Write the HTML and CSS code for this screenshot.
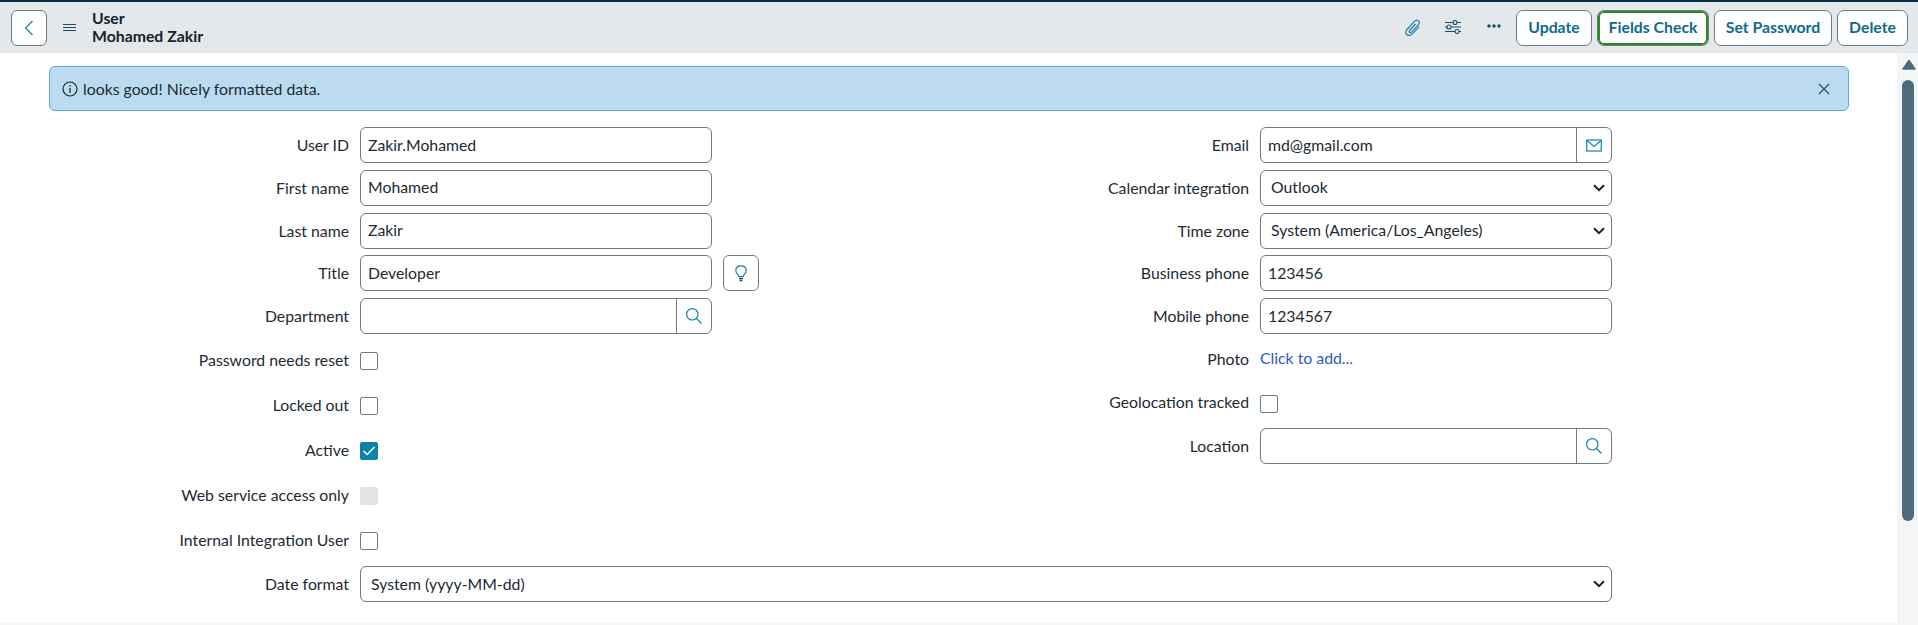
FILE: index.html
```html
<!DOCTYPE html>
<html lang="en">
<head>
    <meta charset="UTF-8">
    <meta name="viewport" content="width=device-width, initial-scale=1.0">
    <title>User - Mohamed Zakir</title>
    <link rel="stylesheet" href="styles.css">
</head>
<body>

    <header class="topbar">
        <button class="back-btn" aria-label="Back">
            <svg width="12" height="16" viewBox="0 0 12 16"><path d="M9.5 1 L2.5 8 L9.5 15" class="icon-line"/></svg>
        </button>
        <svg class="menu-icon" width="13" height="8" viewBox="0 0 13 8"><path d="M0 .5H13M0 3.5H13M0 6.5H13" class="icon-dark"/></svg>
        <div class="record-title">
            <div>User</div>
            <div>Mohamed Zakir</div>
        </div>
        <div class="topbar-right">
            <svg class="tool-icon" width="16" height="18" viewBox="0 0 16 18"><path d="M14.2 7.6 L7.6 14.6 C5.8 16.6 3 16.9 1.7 15.5 C.4 14.2 .8 11.8 2.4 10 L9.2 2.7 C10.5 1.3 12.4 .9 13.5 1.9 C14.6 3 14.2 4.8 13 6.1 L6.8 12.8 C6 13.6 5 13.8 4.5 13.3 C4 12.8 4.2 11.8 5 11 L10.6 5" class="icon-line"/></svg>
            <svg class="tool-icon slider-icon" width="16" height="14" viewBox="0 0 16 14"><path d="M0 2.5H8M12 2.5H16M0 7H2M6 7H16M0 11.5H10M14 11.5H16" class="icon-dark"/><circle cx="10" cy="2.5" r="2" class="icon-dark"/><circle cx="4" cy="7" r="2" class="icon-dark"/><circle cx="12" cy="11.5" r="2" class="icon-dark"/></svg>
            <svg class="tool-icon dots-icon" width="14" height="4" viewBox="0 0 14 4"><circle cx="2" cy="2" r="1.7"/><circle cx="7" cy="2" r="1.7"/><circle cx="12" cy="2" r="1.7"/></svg>
            <button class="action-btn update-btn">Update</button>
            <button class="action-btn action-btn-focus">Fields Check</button>
            <button class="action-btn password-btn">Set Password</button>
            <button class="action-btn delete-btn">Delete</button>
        </div>
    </header>

    <div class="page-body">
        <main class="content">
            <div class="alert">
                <svg width="16" height="16" viewBox="0 0 16 16"><circle cx="8" cy="8" r="7" class="icon-black"/><path d="M8 7V12M8 4V5.4" class="icon-black"/></svg>
                <span class="alert-text">looks good! Nicely formatted data.</span>
                <svg class="alert-close" width="12" height="12" viewBox="0 0 12 12"><path d="M1 1L11 11M11 1L1 11" class="icon-dark"/></svg>
            </div>

            <form class="form">
                <div class="form-col">
                    <div class="row">
                        <label class="field-label">User ID</label>
                        <input class="text-input" type="text" value="Zakir.Mohamed">
                    </div>
                    <div class="row">
                        <label class="field-label">First name</label>
                        <input class="text-input" type="text" value="Mohamed">
                    </div>
                    <div class="row">
                        <label class="field-label">Last name</label>
                        <input class="text-input" type="text" value="Zakir">
                    </div>
                    <div class="row">
                        <label class="field-label">Title</label>
                        <input class="text-input" type="text" value="Developer">
                        <button class="hint-btn" type="button" aria-label="Suggestions">
                            <svg width="12" height="17" viewBox="0 0 12 17"><path d="M4 11.5 C3.6 9.6 .8 8.5 .8 5.5 C.8 2.6 3 .8 6 .8 C9 .8 11.2 2.6 11.2 5.5 C11.2 8.5 8.4 9.6 8 11.5Z" class="icon-line"/><path d="M4 13.5H8M4.6 15.5H7.4" class="icon-base"/></svg>
                        </button>
                    </div>
                    <div class="row">
                        <label class="field-label">Department</label>
                        <div class="input-group">
                            <input class="group-input" type="text">
                            <button class="group-btn" type="button" aria-label="Search">
                                <svg width="16" height="16" viewBox="0 0 16 16"><circle cx="6.3" cy="6.3" r="5.7" class="icon-line"/><path d="M10.5 10.5L15.5 15.5" class="icon-line"/></svg>
                            </button>
                        </div>
                    </div>
                    <div class="check-list">
                        <div class="row check-row">
                            <label class="field-label">Password needs reset</label>
                            <span class="checkbox"></span>
                        </div>
                        <div class="row check-row">
                            <label class="field-label">Locked out</label>
                            <span class="checkbox"></span>
                        </div>
                        <div class="row check-row">
                            <label class="field-label">Active</label>
                            <span class="checkbox checkbox-on">
                                <svg width="12" height="10" viewBox="0 0 12 10"><path d="M.5 5L4.2 8.5L11.5 1" class="icon-white"/></svg>
                            </span>
                        </div>
                        <div class="row check-row">
                            <label class="field-label">Web service access only</label>
                            <span class="checkbox checkbox-off"></span>
                        </div>
                        <div class="row check-row">
                            <label class="field-label">Internal Integration User</label>
                            <span class="checkbox"></span>
                        </div>
                    </div>
                </div>

                <div class="form-col">
                    <div class="row">
                        <label class="field-label">Email</label>
                        <div class="input-group">
                            <input class="group-input" type="text" value="md@gmail.com">
                            <button class="group-btn group-btn-wide" type="button" aria-label="Send email">
                                <svg width="16" height="13" viewBox="0 0 16 13"><rect x=".75" y="1" width="14.5" height="11" class="icon-line"/><path d="M1 1.5L8 7.5L15 1.5" class="icon-line"/></svg>
                            </button>
                        </div>
                    </div>
                    <div class="row">
                        <label class="field-label">Calendar integration</label>
                        <div class="select-wrap">
                            <select class="select-input">
                                <option>Outlook</option>
                            </select>
                            <svg class="select-arrow" width="12" height="8" viewBox="0 0 12 8"><path d="M1 1.2L6 6.2L11 1.2"/></svg>
                        </div>
                    </div>
                    <div class="row">
                        <label class="field-label">Time zone</label>
                        <div class="select-wrap">
                            <select class="select-input">
                                <option>System (America/Los_Angeles)</option>
                            </select>
                            <svg class="select-arrow" width="12" height="8" viewBox="0 0 12 8"><path d="M1 1.2L6 6.2L11 1.2"/></svg>
                        </div>
                    </div>
                    <div class="row">
                        <label class="field-label">Business phone</label>
                        <input class="text-input" type="text" value="123456">
                    </div>
                    <div class="row">
                        <label class="field-label">Mobile phone</label>
                        <input class="text-input" type="text" value="1234567">
                    </div>
                    <div class="row photo-row">
                        <label class="field-label">Photo</label>
                        <a class="add-link" href="#">Click to add...</a>
                    </div>
                    <div class="row geo-row">
                        <label class="field-label">Geolocation tracked</label>
                        <span class="checkbox"></span>
                    </div>
                    <div class="row">
                        <label class="field-label">Location</label>
                        <div class="input-group">
                            <input class="group-input" type="text">
                            <button class="group-btn group-btn-wide" type="button" aria-label="Search">
                                <svg width="16" height="16" viewBox="0 0 16 16"><circle cx="6.3" cy="6.3" r="5.7" class="icon-line"/><path d="M10.5 10.5L15.5 15.5" class="icon-line"/></svg>
                            </button>
                        </div>
                    </div>
                </div>

                <div class="row date-row">
                    <label class="field-label">Date format</label>
                    <div class="select-wrap date-wrap">
                        <select class="select-input">
                            <option>System (yyyy-MM-dd)</option>
                        </select>
                        <svg class="select-arrow" width="12" height="8" viewBox="0 0 12 8"><path d="M1 1.2L6 6.2L11 1.2"/></svg>
                    </div>
                </div>
            </form>
        </main>

        <div class="scrollbar">
            <svg class="scroll-arrow" width="14" height="11" viewBox="0 0 14 11"><path d="M7 1.5L13 10H1Z"/></svg>
            <div class="scroll-thumb"></div>
        </div>
    </div>

</body>
</html>
```

FILE: styles.css
```css
* {
    box-sizing: border-box;
}
html, body {
    height: 100%;
}
body {
    margin: 0;
    font-family: Lato, "Open Sans", sans-serif;
    font-size: 15.8px;
    color: #1c2a33;
    background: #fff;
    border-top: 2px solid #032d42;
    overflow: hidden;
    display: flex;
    flex-direction: column;
}
svg {
    display: block;
    fill: none;
}
.icon-line {
    fill: none;
    stroke: #1a7fa6;
    stroke-width: 1.2;
}
.icon-base {
    fill: none;
    stroke: #125068;
    stroke-width: 1.4;
}
.icon-dark {
    fill: none;
    stroke: #125068;
    stroke-width: 1.1;
}
.icon-black {
    fill: none;
    stroke: #1c2a33;
    stroke-width: 1.2;
}
.icon-white {
    fill: none;
    stroke: #fff;
    stroke-width: 1.5;
}

/* top bar */
.topbar {
    height: 51px;
    flex: none;
    background: #e4e8ea;
    display: flex;
    align-items: center;
    padding: 0 10px 0 11px;
}
.back-btn {
    width: 36px;
    height: 36px;
    padding: 0;
    background: #fff;
    border: 1px solid #6e7b83;
    border-radius: 6px;
    display: flex;
    align-items: center;
    justify-content: center;
}
.menu-icon {
    margin-left: 16px;
}
.record-title {
    margin-left: 16px;
    padding-bottom: 2px;
    font-weight: 700;
    line-height: 18px;
    color: #14222b;
}
.topbar-right {
    margin-left: auto;
    display: flex;
    align-items: center;
}
.slider-icon {
    margin-left: 24px;
    margin-bottom: 2px;
}
.dots-icon {
    margin-left: 26px;
    margin-right: 15px;
    margin-bottom: 3px;
    fill: #125068;
}
.action-btn {
    height: 36px;
    padding: 0 0 2px;
    background: #fff;
    color: #0f6a8b;
    border: 1px solid #6e7b83;
    border-radius: 7px;
    font-family: inherit;
    font-size: 15.8px;
    font-weight: 700;
    cursor: pointer;
}
.update-btn {
    width: 76px;
}
.action-btn-focus {
    width: 112px;
    margin-left: 5px;
    box-shadow: inset 0 0 0 2px #2a8a1c;
}
.password-btn {
    width: 118px;
    margin-left: 5px;
}
.delete-btn {
    width: 71px;
    margin-left: 5px;
}

/* body */
.page-body {
    flex: 1;
    display: flex;
    min-height: 0;
}
.content {
    flex: 1;
    padding: 13px 48px 0 49px;
    border-bottom: 2px solid #f4f5f7;
}
.scrollbar {
    width: 21px;
    flex: none;
    background: #f4f5f7;
    padding: 6px 4px 0 5px;
}
.scroll-arrow {
    fill: #4f6c7d;
    stroke: #4f6c7d;
    stroke-linejoin: round;
    stroke-width: 1.5;
}
.scroll-thumb {
    width: 12px;
    height: 441px;
    margin-top: 10px;
    background: #4f6c7d;
    border-radius: 6px;
}

.alert {
    height: 45px;
    background: #bcdbf0;
    border: 1px solid #5aaae3;
    border-radius: 6px;
    display: flex;
    align-items: center;
    padding: 0 18px 0 12px;
}
.alert-text {
    margin-left: 5px;
}
.alert-close {
    margin-left: auto;
}

/* form */
.form {
    margin-top: 16px;
    display: grid;
    grid-template-columns: 900px 900px;
}
.row {
    display: flex;
    align-items: center;
    min-height: 36px;
    margin-bottom: 6.75px;
}
.field-label {
    width: 300px;
    flex: none;
    margin-right: 11px;
    padding-bottom: 1px;
    text-align: right;
}
.text-input,
.select-input,
.input-group {
    width: 352px;
    height: 36px;
    background: #fff;
    border: 1px solid #6e7b83;
    border-radius: 6px;
}
.text-input,
.group-input {
    padding: 0 7px 2px;
    font-family: inherit;
    font-size: 15.8px;
    color: #1c2a33;
}
.select-wrap {
    position: relative;
    width: 352px;
}
.date-wrap {
    width: 1252px;
}
.select-input {
    display: block;
    width: 100%;
    padding: 0 10px 2px;
    appearance: none;
    font-family: inherit;
    font-size: 15.8px;
    color: #1c2a33;
}
.select-arrow {
    position: absolute;
    top: 14px;
    right: 7px;
    pointer-events: none;
    stroke: #14222b;
    stroke-width: 2;
}
.input-group {
    display: flex;
}
.group-input {
    flex: 1;
    min-width: 0;
    border: none;
    background: none;
    border-radius: 6px 0 0 6px;
}
.group-btn {
    width: 35px;
    padding: 0;
    flex: none;
    background: none;
    border: none;
    border-left: 1px solid #6e7b83;
    display: flex;
    align-items: center;
    justify-content: center;
}
.hint-btn {
    width: 36px;
    height: 36px;
    margin-left: 11px;
    padding: 0;
    background: #fff;
    border: 1px solid #6e7b83;
    border-radius: 6px;
    display: flex;
    align-items: center;
    justify-content: center;
}

.check-list {
    padding-top: 11px;
}
.check-row,
.photo-row,
.geo-row {
    height: 18px;
    min-height: 18px;
}
.check-row {
    margin-bottom: 27px;
}
.check-row .field-label {
    line-height: 16px;
    padding-bottom: 2px;
}
.geo-row .field-label {
    line-height: 16px;
    padding-bottom: 4px;
}
.photo-row .field-label {
    line-height: 18px;
}
.checkbox {
    width: 18px;
    height: 18px;
    background: #fff;
    border: 1px solid #6e7b83;
    border-radius: 2px;
    display: flex;
    align-items: center;
    justify-content: center;
}
.checkbox-on {
    background: #0b84a8;
    border-color: #0b84a8;
}
.checkbox-off {
    background: #e0e4e7;
    border-color: #e0e4e7;
}
.photo-row {
    margin-top: 16px;
    margin-bottom: 27px;
}
.add-link {
    color: #2a5cc7;
    text-decoration: none;
    line-height: 16px;
    padding-bottom: 2px;
}
.geo-row {
    margin-bottom: 15px;
}
.date-row {
    grid-column: 1 / 3;
    margin-top: -10.75px;
}
```
